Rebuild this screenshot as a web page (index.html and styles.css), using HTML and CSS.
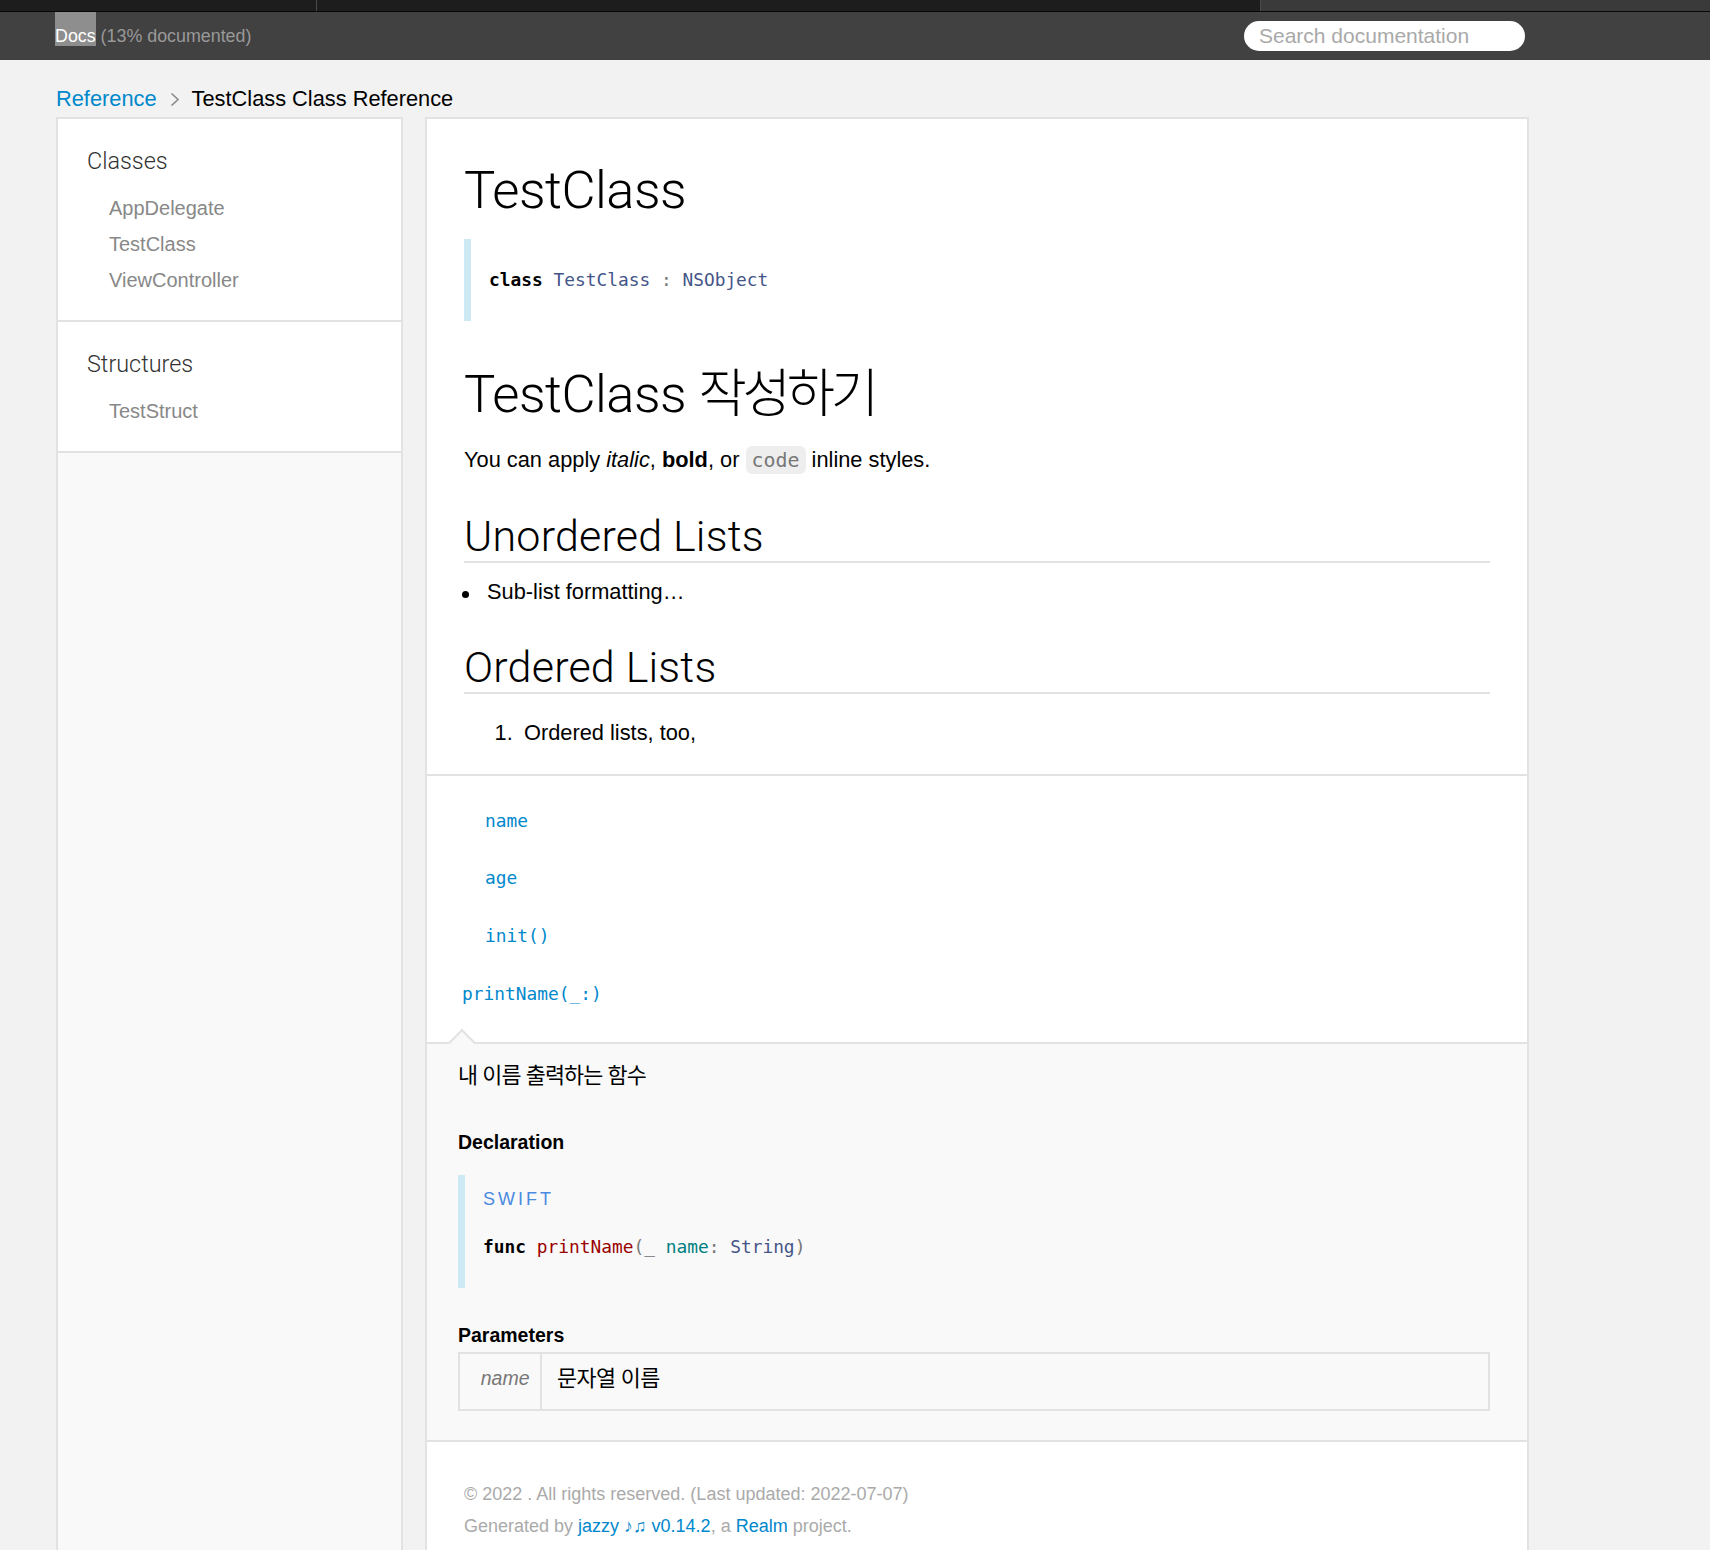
FILE: index.html
```html
<!DOCTYPE html>
<html lang="ko">
<head>
<meta charset="utf-8">
<title>TestClass Class Reference</title>
<link rel="stylesheet" href="styles.css">
</head>
<body>
<div class="tabstrip">
  <div class="tab tab-a"></div>
  <div class="tab tab-b"></div>
  <div class="tab tab-c"></div>
</div>
<header class="header">
  <div class="header-inner">
    <p class="header-title"><a class="docs-link" href="#">Docs</a> (13% documented)</p>
    <form class="search" role="search"><input class="search-input" type="text" placeholder="Search documentation"></form>
  </div>
</header>
<p class="breadcrumbs"><a href="#">Reference</a><svg class="carat" width="35" height="15" viewBox="0 0 35 15"><polyline points="14.5,2.5 21,8.5 14.5,14.5" fill="none" stroke="#8a8a8a" stroke-width="1.6"/></svg>TestClass Class Reference</p>
<div class="layout">
  <nav class="sidebar">
    <ul class="nav-groups">
      <li class="nav-group-name">
        <a class="nav-group-link" href="#">Classes</a>
        <ul class="nav-group-tasks">
          <li class="nav-group-task"><a href="#">AppDelegate</a></li>
          <li class="nav-group-task"><a href="#">TestClass</a></li>
          <li class="nav-group-task"><a href="#">ViewController</a></li>
        </ul>
      </li>
      <li class="nav-group-name">
        <a class="nav-group-link" href="#">Structures</a>
        <ul class="nav-group-tasks">
          <li class="nav-group-task"><a href="#">TestStruct</a></li>
        </ul>
      </li>
    </ul>
  </nav>
  <article class="main-content">
    <section class="intro">
      <h1 class="title">TestClass</h1>
      <div class="decl"><pre class="code"><code><span class="k">class</span> <span class="nc">TestClass</span> <span class="p">:</span> <span class="kt">NSObject</span></code></pre></div>
      <h1 class="title title-ko">TestClass <span class="ko">작성하기</span></h1>
      <p class="para">You can apply <em>italic</em>, <strong>bold</strong>, or <code class="inline-code">code</code> inline styles.</p>
      <h2 class="subhead">Unordered Lists</h2>
      <ul class="bullets"><li>Sub-list formatting…</li></ul>
      <h2 class="subhead subhead-second">Ordered Lists</h2>
      <ol class="numbers"><li>Ordered lists, too,</li></ol>
    </section>
    <section class="task-group">
      <ul class="items">
        <li class="item"><a class="token" href="#">name</a></li>
        <li class="item"><a class="token" href="#">age</a></li>
        <li class="item"><a class="token" href="#">init()</a></li>
        <li class="item"><a class="token token-open" href="#">printName(_:)</a></li>
      </ul>
      <div class="pointer-container"></div>
      <div class="details">
        <div class="pointer"></div>
        <p class="abstract"><span class="ko-text">내 이름 출력하는 함수</span></p>
        <h4 class="detail-head">Declaration</h4>
        <div class="language">
          <p class="aside-title">Swift</p>
          <pre class="code"><code><span class="k">func</span> <span class="nf">printName</span><span class="p">(</span><span class="n">_</span> <span class="nv">name</span><span class="p">:</span> <span class="kt">String</span><span class="p">)</span></code></pre>
        </div>
        <h4 class="detail-head detail-head-params">Parameters</h4>
        <table class="graybox">
          <tbody>
            <tr>
              <td class="param-name"><em>name</em></td>
              <td class="param-desc"><span class="ko-text">문자열 이름</span></td>
            </tr>
          </tbody>
        </table>
      </div>
    </section>
    <footer class="footer">
      <p>© 2022 . All rights reserved. (Last updated: 2022-07-07)</p>
      <p>Generated by <a href="#">jazzy ♪♫ v0.14.2</a>, a <a href="#">Realm</a> project.</p>
    </footer>
  </article>
</div>
</body>
</html>
```
FILE: styles.css
```css
* { box-sizing: border-box; }

html, body {
  margin: 0;
  padding: 0;
}

body {
  background: #f2f2f2;
  color: #000;
  font-family: "Liberation Sans", Arial, "Noto Sans CJK KR", sans-serif;
  font-size: 21.8px;
}

a { color: #0088cc; text-decoration: none; }

/* top window strip */
.tabstrip {
  height: 12px;
  display: flex;
  background: #1d1d1d;
  border-bottom: 1px solid #080808;
}
.tab-a { width: 317px; border-right: 1px solid #4a4a4a; }
.tab-b { width: 944px; border-right: 1px solid #4a4a4a; }
.tab-c { flex: 1; background: #3a3a3a; }

/* header */
.header {
  height: 48px;
  background: #414141;
}
.header-inner {
  margin-left: 55px;
  width: 1470px;
  height: 48px;
  display: flex;
  justify-content: space-between;
  align-items: flex-start;
}
.header-title {
  margin: 0;
  font-size: 17.85px;
  line-height: 48px;
  color: #999;
}
.docs-link {
  display: inline-block;
  vertical-align: top;
  height: 34px;
  line-height: 48px;
  background: #8e8e8e;
  color: #fff;
}
.search { margin: 9px 0 0; }
.search-input {
  display: block;
  width: 281px;
  height: 30px;
  border: 0;
  border-radius: 15px;
  padding: 0 15px;
  background: #fff;
  font-family: "Liberation Sans", Arial, sans-serif;
  font-size: 21px;
  color: #333;
  outline: none;
}
.search-input::placeholder { color: #a9a9a9; }

/* breadcrumbs */
.breadcrumbs {
  margin: 0;
  height: 57px;
  padding: 23px 0 0 56px;
  font-size: 21.8px;
  line-height: 31.5px;
  color: #000;
}
.carat { vertical-align: baseline; }

/* layout */
.layout {
  display: flex;
  align-items: stretch;
  gap: 22px;
  padding-left: 56px;
  height: 1433px;
  overflow: hidden;
}

/* sidebar */
.sidebar {
  width: 347px;
  flex: none;
  background: #f9f9f9;
  border: 2px solid #e2e2e2;
  border-bottom: 0;
}
.nav-groups {
  list-style: none;
  margin: 0;
  padding: 0;
  background: #fff;
}
.nav-group-name {
  padding: 22px 0 22px 29px;
  border-bottom: 2px solid #e2e2e2;
}
.nav-group-link {
  display: block;
  font-family: Roboto, "Liberation Sans", sans-serif;
  font-weight: 300;
  font-size: 23.4px;
  line-height: 41px;
  color: #333;
}
.nav-group-tasks {
  list-style: none;
  margin: 8px 0 0;
  padding: 0 0 0 22px;
}
.nav-group-task {
  font-size: 20px;
  line-height: 36px;
  white-space: nowrap;
}
.nav-group-task a { color: #888; }

/* main content */
.main-content {
  width: 1104px;
  flex: none;
  background: #fff;
  border: 2px solid #e2e2e2;
  border-bottom: 0;
}

.intro {
  padding: 0 37px 22.4px;
}
.title {
  margin: 41px 0 0;
  font-family: Roboto, "Noto Sans CJK KR", sans-serif;
  font-weight: 300;
  font-size: 52.5px;
  line-height: 60px;
  letter-spacing: -0.5px;
  color: #000;
}
.title-ko { margin-top: 43px; }
.ko { letter-spacing: -0.08em; }

.decl {
  margin-top: 19px;
  border-left: 7px solid #cde9f4;
  padding: 26px 18px;
}
.code {
  margin: 0;
  font-family: "DejaVu Sans Mono", monospace;
  font-size: 17.85px;
  line-height: 30px;
  color: #777;
}
.k { color: #000; font-weight: bold; }
.nc, .kt { color: #445588; }
.nf { color: #990000; }
.nv { color: #008080; }
.n { color: #333; }
.p { color: #777; }

.para {
  margin: 16.6px 0 0;
  line-height: 37.8px;
}
.inline-code {
  font-family: "DejaVu Sans Mono", monospace;
  font-size: 19.95px;
  background: #eee;
  color: #777;
  padding: 2px 6px;
  border-radius: 6px;
}

.subhead {
  margin: 32.8px 0 0;
  font-family: Roboto, sans-serif;
  font-weight: 300;
  font-size: 43px;
  line-height: 49px;
  letter-spacing: 0.2px;
  border-bottom: 2px solid #e2e2e2;
  color: #000;
}
.subhead-second { margin-top: 32.5px; }
.bullets {
  list-style: none;
  margin: 10px 0 0;
  padding-left: 23px;
}
.bullets li { line-height: 37.8px; }
.bullets li::before {
  content: "";
  display: inline-block;
  width: 7px;
  height: 7px;
  border-radius: 50%;
  background: #000;
  margin-left: -25.5px;
  margin-right: 18.5px;
  vertical-align: 1px;
}
.numbers {
  list-style: none;
  counter-reset: item;
  margin: 19.5px 0 0;
  padding-left: 30.6px;
}
.numbers li {
  counter-increment: item;
  line-height: 37.8px;
}
.numbers li::before {
  content: counter(item) ".";
  display: inline-block;
  width: 29.4px;
}

/* task group */
.task-group {
  border-top: 2px solid #e2e2e2;
}
.items {
  list-style: none;
  margin: 0;
  padding: 9.5px 0 0 35px;
}
.item {
  padding-top: 12px;
  font-family: "DejaVu Sans Mono", monospace;
  font-size: 17.85px;
  line-height: 45.8px;
}
.token { margin-left: 23px; }
.token-open { margin-left: 0; }

.pointer-container {
  height: 27.5px;
  border-bottom: 2px solid #e2e2e2;
}
.details {
  position: relative;
  background: #f9f9f9;
  border-bottom: 2px solid #e2e2e2;
  padding: 12.4px 37px 29px 31px;
}
.pointer {
  position: absolute;
  left: 25px;
  top: -11px;
  width: 20px;
  height: 20px;
  background: #f9f9f9;
  border-left: 2px solid #e2e2e2;
  border-top: 2px solid #e2e2e2;
  transform: rotate(45deg);
}
.abstract {
  margin: 0;
  line-height: 37.8px;
}
.ko-text { letter-spacing: -0.9px; }
.param-desc .ko-text { letter-spacing: -0.6px; }
.detail-head {
  margin: 33px 0 0;
  font-size: 19.5px;
  font-weight: bold;
  line-height: 29.25px;
}
.detail-head-params { margin-top: 32.6px; }
.language {
  margin-top: 18.15px;
  border-left: 7px solid #cde9f4;
  padding: 9px 18px 26.2px;
}
.aside-title {
  margin: 0;
  font-size: 18px;
  letter-spacing: 3px;
  line-height: 30px;
  text-transform: uppercase;
  color: #4a8ae0;
}
.language .code { margin-top: 18px; }

.graybox {
  margin-top: 1.7px;
  width: 100%;
  border: 2px solid #e2e2e2;
  border-spacing: 0;
}
.graybox td {
  padding: 5px 15px 11px;
  line-height: 39px;
  vertical-align: top;
}
.param-name {
  width: 82px;
  text-align: right;
  padding-right: 10.5px !important;
  border-right: 2px solid #e2e2e2;
  font-size: 19.5px;
  color: #777;
}

/* footer */
.footer {
  margin: 36.8px 0 0 37px;
}
.footer p {
  margin: 0;
  font-size: 18px;
  line-height: 32px;
  color: #aaa;
}
```
